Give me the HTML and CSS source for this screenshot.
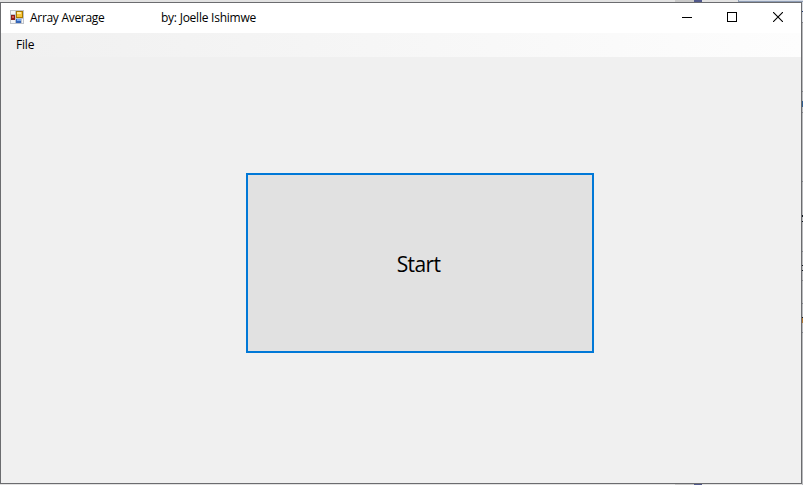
FILE: index.html
```
<!DOCTYPE html>
<html lang="en">
<head>
<meta charset="utf-8">
<title>Array Average</title>
<link rel="stylesheet" href="styles.css">
</head>
<body>
<div class="desktop">
  <svg class="backdrop" width="803" height="485" shape-rendering="crispEdges" aria-hidden="true">
    <path fill="#c8c8c8" d="M675 0h19v2h-19zM675 484h19v1h-19z"/>
    <path fill="#50588a" d="M694 0h8v2h-8zM694 484h8v1h-8z"/>
    <path fill="#d4dae4" d="M739 0h64v2h-64z"/>
    <path fill="#8e9db5" d="M738 0h1v2h-1zM739 1h64v1h-64z"/>
    <path fill="#d5d9df" d="M802 2h1v20h-1z"/>
    <path fill="#263f70" d="M802 11h1v1h-1z"/>
    <path fill="#84868c" d="M802 22h1v1h-1zM802 91h1v1h-1zM802 112h1v1h-1zM802 181h1v1h-1zM802 251h1v1h-1zM802 280h1v1h-1zM802 303h1v1h-1zM802 332h1v1h-1z"/>
    <path fill="#2f5f91" d="M802 101h1v6h-1z"/>
    <path fill="#101820" d="M802 215h1v2h-1zM802 221h1v1h-1zM802 265h1v1h-1zM802 270h1v1h-1zM802 317h1v1h-1z"/>
    <path fill="#b27833" d="M802 318h1v5h-1z"/>
  </svg>
  <main class="window">
    <header class="titlebar">
      <svg class="app-icon" width="14" height="14" shape-rendering="crispEdges" aria-hidden="true">
        <path fill="#bfc3ca" d="M0 0h14v14H0z"/>
        <path fill="#f5f6f8" d="M1 1h4v3H1zM1 10h4v3H1zM12 9h1v4h-1z"/>
        <path fill="#8c1d18" d="M1 5h4v5H1z"/>
        <path fill="#d95a50" d="M2 6h2v2H2z"/>
        <path fill="#a87800" d="M6 1h7v7H6z"/>
        <path fill="#f8c638" d="M7 2h5v5H7z"/>
        <path fill="#ffe89a" d="M7 2h4v2H7z"/>
        <path fill="#3465b8" d="M6 9h5v4H6z"/>
        <path fill="#78a8ef" d="M7 9h4v2H7z"/>
      </svg>
      <span class="title">Array Average</span>
      <span class="author">by: Joelle Ishimwe</span>
      <div class="controls">
        <svg width="10" height="10" shape-rendering="crispEdges"><path fill="#000" d="M0 5h10v1H0z"/></svg>
        <svg width="10" height="10" shape-rendering="crispEdges"><path fill="none" stroke="#000" d="M.5.5h9v9h-9z"/></svg>
        <svg width="10" height="10"><path fill="none" stroke="#000" stroke-width="1.1" d="M0 0l10 10M10 0L0 10"/></svg>
      </div>
    </header>
    <nav class="menubar"><span class="menu-item">File</span></nav>
    <section class="client"><button class="start" type="button"><span class="start-label">Start</span></button></section>
  </main>
</div>
</body>
</html>
```

FILE: styles.css
```
* { box-sizing: border-box; }
body {
  margin: 0;
  overflow: hidden;
  font-family: "Open Sans", "Noto Sans", sans-serif;
  color: #000;
}
.desktop {
  position: relative;
  width: 803px;
  height: 485px;
  padding-top: 2px;
  background: linear-gradient(90deg, #e2e2e2 0 802px, #b9babd 802px);
}
.backdrop { position: absolute; left: 0; top: 0; }
.window {
  position: relative;
  display: flex;
  flex-direction: column;
  width: 802px;
  height: 482px;
  border: 1px solid #6b6c6f;
  background: #f0f0f0;
}
.titlebar {
  display: flex;
  align-items: center;
  flex: 0 0 30px;
  padding-left: 9px;
  background: #fff;
  font-size: 12px;
  line-height: 16px;
  white-space: nowrap;
}
.app-icon { flex: none; margin-top: -2px; }
.title { width: 131px; margin-left: 6px; letter-spacing: -0.3px; }
.author { letter-spacing: -0.24px; }
.controls { display: flex; gap: 36px; margin: -2px 18px 0 auto; }
.controls svg { display: block; }
.controls svg:first-child { margin-right: -1px; }
.menubar {
  flex: 0 0 24px;
  padding: 4px 0 0 15px;
  background: linear-gradient(90deg, #f0f0f0, #fdfdfd);
  font-size: 12px;
  line-height: 16px;
}
.menu-item { letter-spacing: -0.2px; }
.client {
  flex: 1;
  padding: 116px 0 0 245px;
  background: #f0f0f0;
}
.start {
  display: block;
  width: 348px;
  height: 180px;
  padding: 2px 3px 0 0;
  border: 2px solid #0078d7;
  background: #e1e1e1;
  color: #000;
  font: 21px/28px "Open Sans", "Noto Sans", sans-serif;
}
.start-label { letter-spacing: -0.6px; }
```
